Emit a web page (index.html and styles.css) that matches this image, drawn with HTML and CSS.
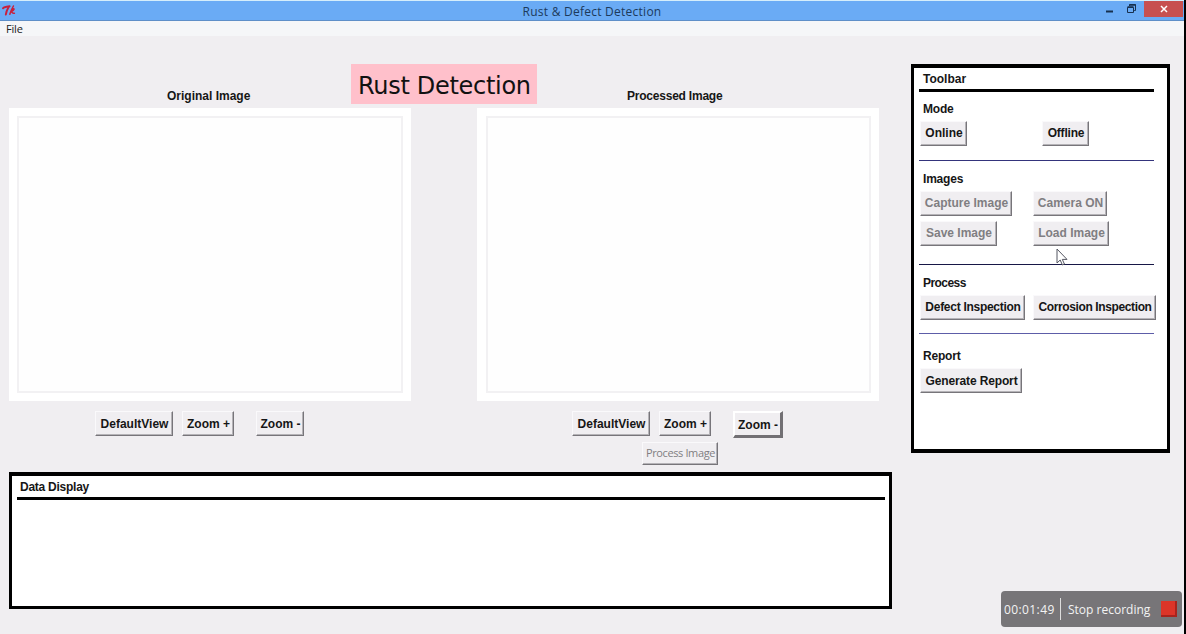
FILE: index.html
```html
<!DOCTYPE html>
<html lang="en">
<head>
<meta charset="utf-8">
<title>Rust &amp; Defect Detection</title>
<link rel="stylesheet" href="styles.css">
</head>
<body>
<div class="window">
  <header class="titlebar">
    <svg class="tk-logo" viewBox="0 0 16 14" width="16" height="14" fill="none" stroke="#c8203c" stroke-linecap="round" stroke-linejoin="round">
      <path d="M1 4.2C2 2.4 4 3 7.6 2.2" stroke-width="2"/>
      <path d="M6.6 3C5.2 5.5 4.2 8 3.8 10.6" stroke-width="1.9"/>
      <path d="M11.4 2C10 4.5 8.6 7.5 7.8 10.2M8.8 7.6C10.6 7.2 12.4 5.8 12 4.9C11.2 4.4 9.8 5.8 9 7.6C10.4 7.8 10.2 10 12.4 9.2" stroke-width="1.5"/>
    </svg>
    <h1 class="window-title">Rust &amp; Defect Detection</h1>
    <div class="controls">
      <svg class="minimize" width="8" height="3" viewBox="0 0 8 3"><path d="M0 .5h7v2H0z" fill="#17304f"/></svg>
      <svg class="restore" width="10" height="10" viewBox="0 0 10 10" fill="none" stroke="#17304f">
        <path d="M2.5 2V.5h6v6H7.2" /><path d="M.5 3.5h6v5h-6z"/><path d="M.5 3h6M2.5 1h6" stroke-width="1.4"/>
      </svg>
      <div class="close"><svg width="8" height="8" viewBox="0 0 8 8"><path d="M1 1l6 6M7 1L1 7" stroke="#fff" stroke-width="1.5"/></svg></div>
    </div>
  </header>
  <nav class="menubar"><span>File</span></nav>
  <main class="content">
    <section class="workspace">
      <div class="headings">
        <h2 class="original">Original Image</h2>
        <div class="banner">Rust Detection</div>
        <h2 class="processed">Processed Image</h2>
      </div>
      <div class="viewers">
        <div class="viewer">
          <div class="canvas"><div class="frame"></div></div>
          <div class="view-buttons left-buttons">
            <button class="btn w78">DefaultView</button>
            <button class="btn w52">Zoom +</button>
            <button class="btn w48">Zoom -</button>
          </div>
        </div>
        <div class="viewer">
          <div class="canvas wide-left"><div class="frame"></div></div>
          <div class="view-buttons right-buttons">
            <button class="btn w78">DefaultView</button>
            <button class="btn w52">Zoom +</button>
            <button class="btn w50 raised">Zoom -</button>
          </div>
          <button class="btn process-image" disabled>Process Image</button>
        </div>
      </div>
      <div class="data-panel">
        <h2>Data Display</h2>
        <div class="rule"></div>
      </div>
    </section>
    <aside class="toolbar">
      <h2>Toolbar</h2>
      <div class="rule"></div>
      <section class="group mode">
        <h3>Mode</h3>
        <div class="row mode-row"><button class="btn w47">Online</button><button class="btn w47 snug">Offline</button></div>
      </section>
      <section class="group images">
        <h3>Images</h3>
        <div class="grid">
          <button class="btn w92" disabled>Capture Image</button><button class="btn w74" disabled>Camera ON</button>
          <button class="btn w77" disabled>Save Image</button><button class="btn w76" disabled>Load Image</button>
        </div>
      </section>
      <section class="group process">
        <h3 class="tight">Process</h3>
        <div class="grid"><button class="btn w105 defect">Defect Inspection</button><button class="btn w123 corrosion">Corrosion Inspection</button></div>
      </section>
      <section class="group report">
        <h3 class="snug">Report</h3>
        <button class="btn w102 generate">Generate Report</button>
      </section>
    </aside>
  </main>
</div>
<svg class="cursor" width="12" height="18" viewBox="0 0 12 18"><path d="M1 1v14l3.2-3 2.2 5 2-1-2.1-4.6H11z" fill="#fff" stroke="#555762" stroke-width="1"/></svg>
<div class="recorder">
  <span class="time">00:01:49</span>
  <span class="stop">Stop recording</span>
  <span class="stop-icon"></span>
</div>
</body>
</html>
```
FILE: styles.css
```css
* { box-sizing: border-box; }
body {
  margin: 0; height: 634px; overflow: hidden; background: #000;
  position: relative; color: #161616;
  font: bold 12px/14px "Liberation Sans", Arial, sans-serif;
}
h1, h2, h3 { margin: 0; font: inherit; }
.window { width: 1184px; height: 634px; background: #f0eef1; }
.titlebar {
  display: flex; align-items: flex-start; height: 21px;
  background: #6aabf5; border-top: 1px solid #d5eefb; border-bottom: 1px solid #5e8fc8;
}
.tk-logo { margin: 3px 0 0 2px; }
.window-title {
  flex: 1; text-align: center; padding-left: 60px; color: #1c3a5c;
  font: 12px/21px "Open Sans", "Noto Sans", sans-serif; letter-spacing: .25px;
}
.controls { display: flex; width: 78px; }
.minimize { margin: 9px 0 0 0; }
.restore { margin: 3px 0 0 13px; }
.close {
  display: flex; align-items: center; justify-content: center;
  width: 39px; height: 16px; margin-left: 7px; background: #c75050;
}
.menubar {
  height: 15px; padding-left: 6px; background: #f5f6f8; color: #222;
  font: 11px/16px "Open Sans", "Noto Sans", sans-serif; letter-spacing: -.2px;
}
.content { display: flex; align-items: flex-start; gap: 19px; padding: 28px 0 0 9px; }
.workspace { width: 883px; }
.headings { display: flex; height: 44px; }
.original { width: 342px; padding: 25px 0 0 158px; }
.banner {
  width: 186px; height: 40px; padding-left: 7px; background: #ffc0cb; color: #111;
  font: 24px/44px "DejaVu Sans", Verdana, sans-serif; letter-spacing: -.3px; white-space: nowrap;
}
.processed { padding: 25px 0 0 90px; letter-spacing: -.22px; }
.viewers { display: flex; gap: 66px; height: 364px; }
.viewer { width: 402px; }
.canvas { height: 293px; padding: 8px; background: #fff; }
.canvas.wide-left { padding-left: 9px; }
.frame { height: 277px; border: 2px solid #f2f1f3; background: #fefefe; }
.view-buttons { display: flex; align-items: flex-start; height: 31px; margin-top: 10px; }
.left-buttons { padding-left: 86px; }
.right-buttons { padding-left: 95px; }
.view-buttons .btn:nth-child(2) { margin: 0 22px 0 9px; }
.btn {
  display: block; height: 25px; padding: 0 0 2px 1px; margin: 0;
  border: 1px solid; border-color: #faf9fb #77757a #77757a #faf9fb;
  box-shadow: inset -1px -1px #b5b3b7;
  border-radius: 0; background: #f0eef1; color: #161616;
  font: inherit; white-space: nowrap; text-align: center;
}
.view-buttons .btn, .btn.generate { padding-bottom: 0; }
.btn:disabled { color: #807e82; }
.view-buttons .raised { height: 27px; padding-top: 2px; border-width: 2px 3px 3px 2px; border-color: #fff #727074 #727074 #fff; box-shadow: none; }
.btn.process-image {
  width: 76px; height: 23px; margin-left: 165px;
  font: 11px/16px "Open Sans", "Noto Sans", sans-serif; letter-spacing: -.38px;
}
.w47 { width: 47px; } .w48 { width: 48px; } .w50 { width: 50px; }
.w52 { width: 52px; } .w74 { width: 74px; } .w76 { width: 76px; }
.w77 { width: 77px; } .w78 { width: 78px; } .w92 { width: 92px; }
.w102 { width: 102px; } .w105 { width: 105px; } .w123 { width: 123px; }
.data-panel { height: 137px; border: 3px solid #000; border-top-width: 4px; background: #fff; }
.data-panel h2 { height: 21px; padding: 4px 0 0 8px; letter-spacing: -.25px; }
.data-panel .rule { margin: 0 4px 0 5px; }
.rule { height: 3px; background: #000; }
.toolbar { width: 259px; height: 389px; border: 4px solid #000; border-right-width: 3px; border-left-width: 3px; background: #fff; }
.toolbar h2 { height: 21px; padding: 4px 0 0 9px; }
.toolbar .rule { width: 235px; margin-left: 5px; }
.group { width: 235px; margin-left: 5px; border-bottom: 1px solid #34347c; }
.group h3 { padding-left: 4px; height: 19px; }
.group > .btn, .group > div { margin-left: 1px; }
.row { display: flex; }
.mode-row { gap: 75px; }
.grid { display: grid; grid-template-columns: 113px 123px; row-gap: 5px; }
.group.mode { height: 69px; padding-top: 10px; }
.group.images { height: 104px; padding-top: 11px; border-color: #171746; }
.group.process { height: 69px; padding-top: 11px; border-color: #5d5da8; }
.group.report { padding-top: 15px; border: 0; }
.group.mode h3 { letter-spacing: -.2px; }
.group.images h3 { letter-spacing: -.2px; }
.group .tight { letter-spacing: -.55px; }
.snug { letter-spacing: -.2px; }
.defect { letter-spacing: -.28px; }
.corrosion { letter-spacing: -.38px; }
.generate { letter-spacing: -.13px; }
.cursor { position: absolute; left: 1056px; top: 248px; }
.recorder {
  position: absolute; left: 1001px; top: 591px; width: 181px; height: 36px;
  display: flex; align-items: center; border-radius: 4px; background: #777578; color: #f3f3f3;
  font: 12px/23px "Open Sans", "Noto Sans", sans-serif; white-space: nowrap;
}
.time { width: 60px; padding-left: 3px; height: 22px; border-right: 1px solid #ddd; letter-spacing: .4px; }
.stop { width: 100px; padding-left: 7px; height: 22px; }
.stop-icon { width: 16px; height: 16px; background: #dc3529; border: solid #a8241d; border-width: 0 2px 2px 0; }
```
